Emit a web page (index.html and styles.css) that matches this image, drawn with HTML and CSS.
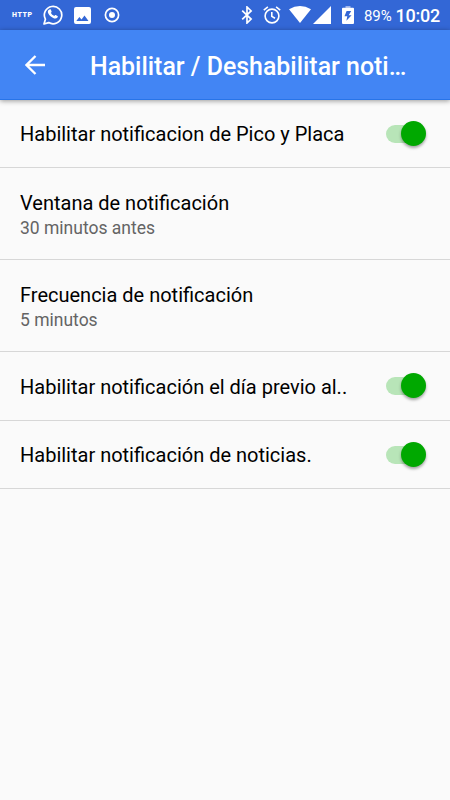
FILE: index.html
```html
<!DOCTYPE html>
<html lang="es">
<head>
<meta charset="utf-8">
<title>Notificaciones</title>
<link rel="stylesheet" href="styles.css">
</head>
<body>
<div class="status">
  <span class="http">HTTP</span>
  <svg class="whatsapp" width="20" height="21" viewBox="0 0 20 21"><path d="M1 20l1.400-4.800A8.700 8.700 0 1 1 5.700 18.600z" fill="none" stroke="#fff" stroke-width="1.700" stroke-linejoin="round"/><path d="M6.900 5.200c.5-.1.800 0 1 .5l.7 1.700c.1.300 0 .6-.8 1.400.8 1.500 1.900 2.500 3.500 3.200.8-1 .9-1.200 1.300-1l1.900.9c.5.300.3 1.200-.1 1.700-1 1.200-2.600 1.100-4.200.4-2.300-1-4-2.700-5-4.700-.8-1.800-.3-3.500 1.700-4.100z" fill="#fff"/></svg>
  <svg class="picture" width="17" height="17" viewBox="0 0 17 17"><path fill="#fff" fill-rule="evenodd" d="M2 0h13a2 2 0 0 1 2 2v13a2 2 0 0 1-2 2H2a2 2 0 0 1-2-2V2a2 2 0 0 1 2-2zM2.300 14h12.200l-4-5.400-3 3.900-2.100-2.500z"/></svg>
  <svg class="record" width="16" height="16" viewBox="0 0 16 16"><circle cx="8" cy="8" r="6.600" fill="none" stroke="#fff" stroke-width="1.700"/><circle cx="8" cy="8" r="3" fill="#fff"/></svg>
  <svg class="bluetooth" width="12" height="18" viewBox="0 0 12 18"><path d="M1.200 4.600l8.900 8.500L6 17V1l4.100 3.900-8.900 8.500" fill="none" stroke="#fff" stroke-width="1.700"/></svg>
  <svg class="alarm" width="18" height="18" viewBox="0 0 18 18"><circle cx="9" cy="10" r="6.900"/><path d="M.8 4.200L4.900.9M17.200 4.200L13.100.9M8.800 6v4.400l3.200 1.900"/></svg>
  <svg class="wifi" width="22" height="17" viewBox="0 0 22 17"><path d="M11 17L0 3.300Q11-3.300 22 3.300z" fill="#fff"/></svg>
  <svg class="signal" width="18" height="18" viewBox="0 0 18 18"><path d="M0 18L18 0v18z" fill="#fff"/></svg>
  <svg class="battery" width="12" height="18" viewBox="0 0 12 18"><path d="M3.500 0h5v2H3.500z" fill="#9fb5eb"/><path fill="#fff" fill-rule="evenodd" d="M1 1.700h10a1 1 0 0 1 1 1V17a1 1 0 0 1-1 1H1a1 1 0 0 1-1-1V2.700a1 1 0 0 1 1-1zM4.600 5L2.500 10.200h2.800L4.400 14.800l5.200-5.600H6.700L9.200 5z"/></svg>
  <span class="percent">89%</span>
  <span class="clock">10:02</span>
</div>
<header class="toolbar">
  <svg class="back" width="20" height="20" viewBox="0 0 20 20"><path d="M20 10H1.700M10.500 1L1.500 10l9 9" fill="none" stroke="#fff" stroke-width="2.300"/></svg>
  <h1>Habilitar / Deshabilitar noti…</h1>
</header>
<main>
  <div class="row"><span class="label">Habilitar notificacion de Pico y Placa</span><span class="toggle"></span></div>
  <div class="row tall"><span class="label">Ventana de notificación</span><span class="value">30 minutos antes</span></div>
  <div class="row tall"><span class="label">Frecuencia de notificación</span><span class="value">5 minutos</span></div>
  <div class="row extra"><span class="label">Habilitar notificación el día previo al..</span><span class="toggle"></span></div>
  <div class="row"><span class="label">Habilitar notificación de noticias.</span><span class="toggle"></span></div>
</main>
</body>
</html>
```
FILE: styles.css
```css
* { box-sizing: border-box; }
body { margin: 0; width: 450px; height: 800px; overflow: hidden; background: #fafafa; font-family: Roboto, sans-serif; color: #000; }
svg { display: block; flex: none; }
.status { height: 30px; display: flex; align-items: center; padding-left: 12px; background: #3367d6; color: #fff; white-space: nowrap; }
.http { width: 30.5px; font-size: 7px; font-weight: 900; letter-spacing: .6px; }
.whatsapp { margin-top: -1px; }
.picture { margin-left: 11.500px; }
.record { margin-left: 13.400px; }
.bluetooth { margin-left: 121px; }
.alarm { margin-left: 10px; fill: none; stroke: #fff; stroke-width: 1.6; }
.wifi { margin-left: 8px; margin-top: -1px; }
.signal { margin-left: 2px; }
.battery { margin-left: 10.6px; }
.percent { width: 31.4px; margin-left: 10px; font-size: 15px; letter-spacing: -.1px; line-height: 30px; padding-top: 1px; }
.clock { font-size: 18px; font-weight: 500; letter-spacing: -.2px; line-height: 30px; padding-top: 1px; }
.toolbar { position: relative; height: 70px; display: flex; align-items: center; padding-left: 25px; background: #4285f4; border-bottom: 1px solid #2874e8; box-shadow: 0 1px 5px rgba(0,0,0,.4); color: #fff; }
.back { margin-top: 1px; }
h1 { margin: 4px 0 0 45px; font-size: 24.9px; line-height: 30px; font-weight: 500; white-space: nowrap; }
.row { height: 68px; padding: 0 24px 0 20px; display: flex; align-items: center; justify-content: space-between; border-bottom: 1px solid #d7d7d7; }
.tall { height: 92px; padding-top: 2px; flex-direction: column; align-items: flex-start; justify-content: center; }
.extra { height: 69px; padding-bottom: 1px; }
.label { font-size: 20px; line-height: 26px; white-space: nowrap; padding-top: 1px; }
.extra .label { padding-top: 3px; }
.value { font-size: 17.5px; line-height: 24px; color: #646464; }
.toggle { position: relative; width: 40px; height: 25px; flex: none; }
.toggle::before { content: ""; position: absolute; left: 0; top: 4px; width: 35px; height: 18px; border-radius: 9px; background: #b8e5b8; }
.toggle::after { content: ""; position: absolute; right: 0; top: 0; width: 25px; height: 25px; border-radius: 50%; background: #00a800; box-shadow: 0 2px 3px rgba(0,0,0,.35); }
```
